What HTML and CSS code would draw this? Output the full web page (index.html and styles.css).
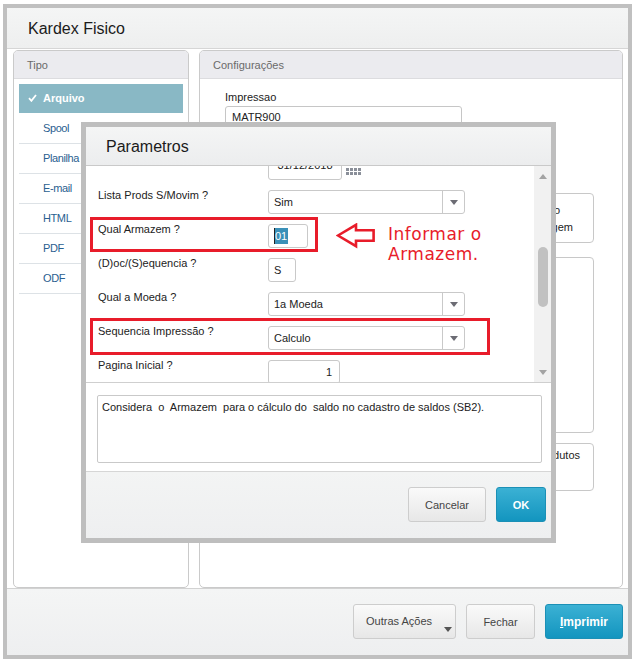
FILE: index.html
```html
<!DOCTYPE html>
<html lang="pt-BR">
  <head>
    <meta charset="UTF-8" />
    <title>Kardex Fisico</title>
    <link rel="stylesheet" href="styles.css">
  </head>
  <body>
    <div class="window">
      <div class="window-header">
        <h1 class="window-title">Kardex Fisico</h1>
      </div>

      <div class="window-body">
        <div class="panel panel-tipo">
          <div class="panel-header">Tipo</div>
          <ul class="tipo-list">
            <li class="tipo-item selected">
              <svg class="check-icon" width="9" height="8" viewBox="0 0 9 8" fill="none" stroke="currentColor" stroke-width="1.8">
                <polyline points="1,4.2 3.4,6.8 8,1"></polyline>
              </svg>
              Arquivo
            </li>
            <li class="tipo-item">Spool</li>
            <li class="tipo-item">Planilha</li>
            <li class="tipo-item">E-mail</li>
            <li class="tipo-item">HTML</li>
            <li class="tipo-item">PDF</li>
            <li class="tipo-item">ODF</li>
          </ul>
        </div>

        <div class="panel panel-config">
          <div class="panel-header">Configurações</div>
          <div class="config-body">
            <label class="field-label">Impressao</label>
            <div class="config-input">MATR900</div>

            <div class="group-box box-format">
              <div class="orientation">
                <div>Retrato</div>
                <div>Paisagem</div>
              </div>
            </div>
            <div class="group-box box-list"></div>
            <div class="group-box box-products">Filtra Produtos</div>
          </div>
        </div>
      </div>

      <div class="window-footer">
        <button class="btn btn-menu">Outras Ações<span class="caret"></span></button>
        <button class="btn btn-close">Fechar</button>
        <button class="btn btn-primary btn-print"><u>I</u>mprimir</button>
      </div>
    </div>

    <!-- Parametros dialog, drawn over the window -->
    <div class="dialog">
      <div class="dialog-header">Parametros</div>

      <div class="param-area">
        <div class="param-scroll">
          <div class="param-list">
            <!-- first row is scrolled mostly out of view -->
            <div class="param-row">
              <div class="param-label"></div>
              <div class="param-input input-date">31/12/2018</div>
              <div class="calendar-icon">
                <span></span><span></span><span></span><span></span>
                <span></span><span></span><span></span><span></span>
              </div>
            </div>

            <div class="param-row">
              <div class="param-label">Lista Prods S/Movim ?</div>
              <div class="param-input param-select">
                <span class="select-value">Sim</span>
                <span class="select-arrow"></span>
              </div>
            </div>

            <div class="param-row">
              <div class="param-label">Qual Armazem ?</div>
              <div class="param-input input-short"><span class="text-selected">01</span></div>
              <div class="mark-box mark-armazem"></div>
              <svg class="note-arrow" width="40" height="26" viewBox="0 0 40 26" fill="none" stroke="#e81c2a" stroke-width="2.6">
                <path d="M2 12.5 L20 1.8 V7.2 H37.6 V17.8 H20 V23.2 Z"></path>
              </svg>
              <div class="note-text">Informar o<br />Armazem.</div>
            </div>

            <div class="param-row">
              <div class="param-label">(D)oc/(S)equencia ?</div>
              <div class="param-input input-char">S</div>
            </div>

            <div class="param-row">
              <div class="param-label">Qual a Moeda ?</div>
              <div class="param-input param-select">
                <span class="select-value">1a Moeda</span>
                <span class="select-arrow"></span>
              </div>
            </div>

            <div class="param-row">
              <div class="param-label">Sequencia Impressão ?</div>
              <div class="param-input param-select">
                <span class="select-value">Calculo</span>
                <span class="select-arrow"></span>
              </div>
              <div class="mark-box mark-sequencia"></div>
            </div>

            <div class="param-row">
              <div class="param-label">Pagina Inicial ?</div>
              <div class="param-input input-number">1</div>
            </div>
          </div>
        </div>

        <div class="scrollbar">
          <span class="scroll-btn scroll-up"></span>
          <span class="scroll-thumb"></span>
          <span class="scroll-btn scroll-down"></span>
        </div>
      </div>

      <div class="help-area">
        <div class="help-box">Considera  o  Armazem  para o cálculo do  saldo no cadastro de saldos (SB2).</div>
      </div>

      <div class="dialog-footer">
        <button class="btn btn-cancel">Cancelar</button>
        <button class="btn btn-primary btn-ok">OK</button>
      </div>
    </div>
  </body>
</html>
```

FILE: styles.css
```css
* {
  margin: 0;
  padding: 0;
  box-sizing: border-box;
  font-family: "Liberation Sans", Arial, sans-serif;
}

body {
  background-color: white;
  position: relative;
  width: 636px;
  height: 663px;
  overflow: hidden;
}

/* Main window */
.window {
  margin: 4px 0 0 3px;
  width: 629px;
  height: 655px;
  border: 4px solid #c0c0c0;
  display: flex;
  flex-direction: column;
  background-color: white;
}

.window-header {
  height: 41px;
  padding: 1px 0 0 21px;
  background: linear-gradient(#f4f5f5, #eeefef);
  border-bottom: 1px solid #d6d6d6;
}

.window-title {
  font-size: 16px;
  font-weight: normal;
  line-height: 40px;
  color: #1b1b1b;
}

.window-body {
  flex: 1;
  display: flex;
  gap: 10px;
  padding: 1px 5px 0 6px;
}

.window-footer {
  height: 67px;
  display: flex;
  justify-content: flex-end;
  align-items: flex-start;
  gap: 10px;
  padding: 15px 5px 0 0;
  border-top: 1px solid #d2d2d2;
  background: linear-gradient(#f4f5f5, #eeeff0);
}

/* Panels */
.panel {
  border: 1px solid #cacaca;
  border-radius: 5px;
  background-color: white;
  display: flex;
  flex-direction: column;
}

.panel-tipo {
  width: 176px;
}

.panel-config {
  flex: 1;
}

.panel-header {
  height: 28px;
  line-height: 28px;
  padding-left: 13px;
  font-size: 11px;
  color: #6a6a6a;
  background-color: #ebebef;
  border-bottom: 1px solid #dcdcdf;
  border-radius: 4px 4px 0 0;
}

.tipo-list {
  list-style: none;
  padding: 5px 5px 0 5px;
}

.tipo-item {
  height: 30px;
  line-height: 29px;
  padding-left: 24px;
  font-size: 11px;
  letter-spacing: -0.4px;
  color: #2a6090;
  border-bottom: 1px solid #dde2e6;
}

.tipo-item.selected {
  display: flex;
  align-items: center;
  gap: 6px;
  padding-left: 9px;
  background-color: #89b8c5;
  border-bottom-color: white;
  color: white;
  font-weight: bold;
  letter-spacing: 0;
}

.check-icon {
  margin-top: -1px;
}

.config-body {
  padding: 12px 28px 0 25px;
}

.field-label {
  display: block;
  font-size: 11px;
  line-height: 13px;
  margin-bottom: 2px;
  color: #222;
}

.config-input {
  width: 237px;
  height: 24px;
  border: 1px solid #c6c6c6;
  border-radius: 3px;
  padding-left: 6px;
  font-size: 11px;
  line-height: 20px;
  color: #222;
}

.group-box {
  border: 1px solid #c8c8c8;
  border-radius: 4px;
  font-size: 11px;
  color: #222;
}

.box-format {
  height: 50px;
  margin-top: 63px;
  padding-top: 8px;
  display: flex;
}

.orientation {
  margin-left: auto;
  width: 69px;
  line-height: 17px;
}

.box-list {
  height: 176px;
  margin-top: 14px;
}

.box-products {
  height: 48px;
  margin-top: 10px;
  padding: 5px 13px 0 0;
  line-height: 13px;
  text-align: right;
}

/* Buttons */
.btn {
  height: 35px;
  border: 1px solid #cdcdcd;
  border-radius: 3px;
  background: linear-gradient(#fafafa, #e7e7e7);
  font-size: 11px;
  color: #444;
  cursor: pointer;
}

.btn-menu {
  width: 103px;
  position: relative;
  text-align: left;
  padding: 0 0 2px 12px;
}

.caret {
  position: absolute;
  right: 3px;
  bottom: 6px;
  border-left: 4px solid transparent;
  border-right: 4px solid transparent;
  border-top: 5px solid #555;
}

.btn-close {
  width: 69px;
}

.btn-primary {
  border-color: #1b90b6;
  background: linear-gradient(#3bb1d4, #1395bf);
  color: white;
  font-weight: bold;
}

.btn-print {
  width: 78px;
  font-size: 12px;
}

.btn-cancel {
  width: 78px;
}

.btn-ok {
  width: 50px;
}

/* Parametros dialog */
.dialog {
  position: absolute;
  left: 81px;
  top: 122px;
  width: 475px;
  height: 421px;
  border: 5px solid #bebebe;
  background-color: white;
  display: flex;
  flex-direction: column;
}

.dialog-header {
  height: 39px;
  line-height: 39px;
  padding-left: 20px;
  font-size: 16px;
  color: #1b1b1b;
  background: linear-gradient(#f4f5f5, #ecedee);
  border-bottom: 1px solid #c9c9c9;
}

.param-area {
  height: 217px;
  display: flex;
  border-bottom: 1px solid #cfcfcf;
}

.param-scroll {
  flex: 1;
  overflow: hidden;
}

.param-list {
  margin-top: -10px;
}

.param-row {
  position: relative;
  display: flex;
  align-items: flex-start;
  height: 34px;
  padding-left: 12px;
}

.param-label {
  width: 170px;
  margin-top: -1px;
  font-size: 11px;
  line-height: 13px;
  color: #222;
}

.param-input {
  height: 24px;
  padding: 0 5px;
  border: 1px solid #c9c9c9;
  border-radius: 3px;
  background-color: white;
  font-size: 11px;
  line-height: 22px;
  color: #222;
}

.input-date {
  width: 74px;
  text-align: center;
  line-height: 17px;
}

.input-short {
  width: 40px;
}

.input-char {
  width: 28px;
}

.input-number {
  width: 72px;
  text-align: right;
  padding-right: 7px;
}

.param-select {
  width: 197px;
  display: flex;
  padding: 0;
}

.select-value {
  flex: 1;
  padding-left: 5px;
}

.select-arrow {
  width: 22px;
  border-left: 1px solid #c9c9c9;
  display: flex;
  align-items: center;
  justify-content: center;
}

.select-arrow::after {
  content: "";
  border-left: 4px solid transparent;
  border-right: 4px solid transparent;
  border-top: 5px solid #6c6c74;
}

.text-selected {
  display: inline-block;
  line-height: 16px;
  vertical-align: middle;
  margin-top: -2px;
  padding-right: 1px;
  border-left: 1px solid #222;
  background-color: #3a90b8;
  color: white;
}

.calendar-icon {
  display: grid;
  grid-template-columns: repeat(4, 3px);
  gap: 1px;
  margin: 12px 0 0 4px;
}

.calendar-icon span {
  width: 3px;
  height: 3px;
  background-color: #8a8f99;
}

/* Red annotation marks */
.mark-box {
  position: absolute;
  left: 4px;
  border: 3px solid #e81c2a;
}

.mark-armazem {
  top: -7px;
  width: 228px;
  height: 35px;
}

.mark-sequencia {
  top: -8px;
  width: 400px;
  height: 37px;
}

.note-arrow {
  position: absolute;
  left: 250px;
  top: -1px;
}

.note-text {
  position: absolute;
  left: 302px;
  top: 0;
  font-family: "DejaVu Sans", Verdana, sans-serif;
  font-size: 17px;
  line-height: 20px;
  letter-spacing: 0.5px;
  white-space: nowrap;
  color: #e81c2a;
}

.scrollbar {
  width: 17px;
  display: flex;
  flex-direction: column;
  align-items: center;
  background-color: #f1f1f1;
}

.scroll-btn {
  height: 20px;
  display: flex;
  align-items: center;
}

.scroll-up::after {
  content: "";
  border-left: 4px solid transparent;
  border-right: 4px solid transparent;
  border-bottom: 5px solid #a3a3a3;
}

.scroll-down {
  margin-top: auto;
}

.scroll-down::after {
  content: "";
  border-left: 4px solid transparent;
  border-right: 4px solid transparent;
  border-top: 5px solid #a3a3a3;
}

.scroll-thumb {
  width: 10px;
  height: 60px;
  margin-top: 61px;
  border-radius: 5px;
  background-color: #c1c1c1;
}

.help-area {
  height: 89px;
  padding: 12px 9px 0 11px;
  border-bottom: 1px solid #d6d6d6;
}

.help-box {
  height: 68px;
  padding: 5px 4px;
  border: 1px solid #c9c9c9;
  border-radius: 2px;
  font-size: 11px;
  line-height: 13px;
  white-space: pre;
  color: #222;
}

.dialog-footer {
  flex: 1;
  display: flex;
  justify-content: flex-end;
  align-items: flex-start;
  gap: 10px;
  padding: 15px 5px 0 0;
  background: linear-gradient(#f3f4f4, #eeeff0);
}
```
